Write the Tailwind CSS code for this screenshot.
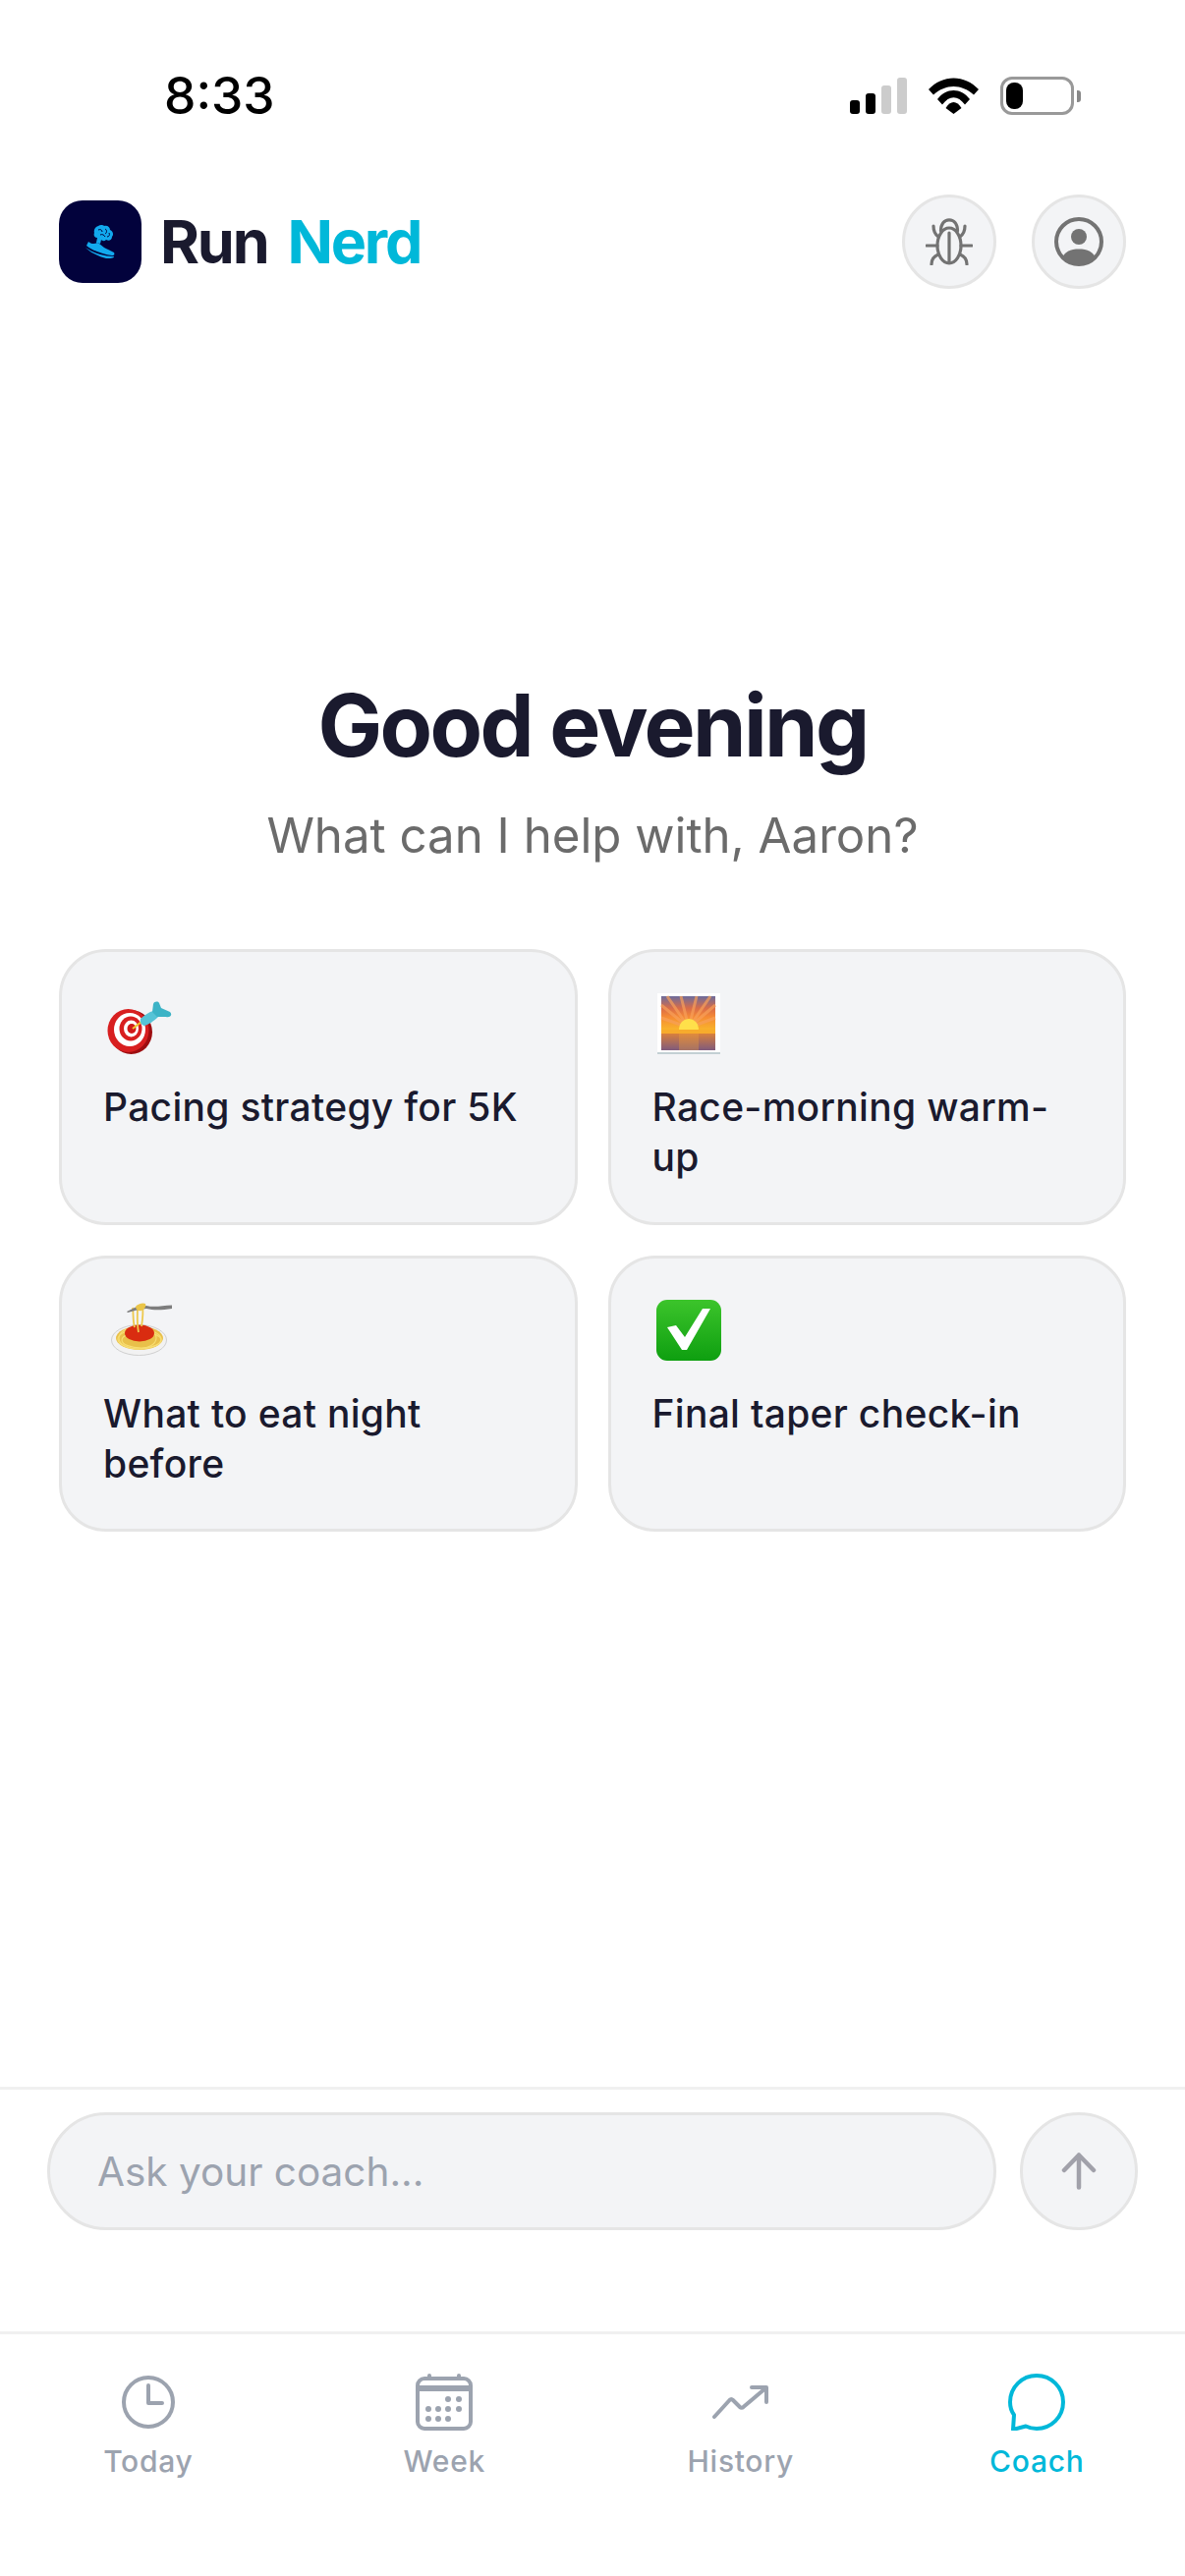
<!DOCTYPE html>
<html lang="en">
<head>
    <meta charset="UTF-8">
    <meta name="viewport" content="width=device-width, initial-scale=1.0">
    <title>Run Nerd</title>
    <script src="https://cdn.jsdelivr.net/npm/@tailwindcss/browser@4"></script>
</head>
<body class="bg-white font-['Inter',sans-serif]">
<div class="w-[1206px] h-[2622px] flex flex-col overflow-hidden bg-white">

    <!-- status bar -->
    <div class="h-[204px] shrink-0 flex items-start justify-between pt-[66px] pl-[167px] pr-[106px]">
        <span class="text-[51.500px] leading-[63px] font-medium text-black">8:33</span>
        <div class="flex items-center gap-[22px] pt-[12px] h-[51px]">
            <div class="flex items-end gap-[6px] h-[37px]">
                <div class="w-[10px] h-[14px] rounded-[3px] bg-black"></div>
                <div class="w-[10px] h-[21px] rounded-[3px] bg-black"></div>
                <div class="w-[10px] h-[29px] rounded-[3px] bg-[#cccccc]"></div>
                <div class="w-[10px] h-[37px] rounded-[3px] bg-[#cccccc]"></div>
            </div>
            <svg width="51" height="37" viewBox="0 0 51 37" fill="black">
                <path d="M0 12C14-3.500 37-3.500 51 12L46 17.500C33.500 6 17.500 6 5 17.500Z"/>
                <path d="M9 22C18 10 33 10 42 22L37 27.500C30 17.700 21 17.700 14 27.500Z"/>
                <path d="M17.500 31C22 23 29 23 33.500 31L25.500 37Z"/>
            </svg>
            <div class="flex items-center gap-[3px]">
                <div class="w-[75px] h-[39px] rounded-[12px] border-[3px] border-[#999999] p-[3px]">
                    <div class="w-[17px] h-full rounded-[8px] bg-black"></div>
                </div>
                <div class="w-[4px] h-[12px] rounded-r-[3px] bg-[#888888]"></div>
            </div>
        </div>
    </div>

    <!-- header -->
    <header class="h-[90px] shrink-0 flex items-center justify-between pl-[60px] pr-[60px] -mt-[3px]">
        <div class="flex items-center gap-[19px]">
            <div class="w-[84px] h-[84px] rounded-[24px] bg-[#02023c] flex items-center justify-center">
                <svg width="30" height="34" viewBox="0 0 30 34" fill="#12a9ee">
                    <path d="M13 1C15-.5 18 0 19 1C22 0 25 2 25 5C28 6 29 10 27 12C27 15 24 17 21 15C19 17 17 16 16 15L15 19L11 18L12 13C9 13 8 10 9 8C8 5 10 2 13 1Z"/>
                    <path d="M13 5C15 4 17 5 17 7M20 4C22 5 22 8 20 9M15 10C17 9 19 10 20 12M24 8C25 10 24 12 22 12" fill="none" stroke="#02023c" stroke-width="1"/>
                    <path d="M3 17C5 19 9 20 12 18L14 19L19 23C22 25 26 26 29 28C30 30 29 31 27 31C18 30 7 26 1 21Z"/>
                    <path d="M0 23C7 28 18 32 29 32C29 34 25 34 21 34C13 32 5 28 0 23Z"/>
                </svg>
            </div>
            <div class="text-[61px] leading-[72px] font-bold tracking-[-2.200px] text-[#1a1a2e] flex gap-[20px]">
                <span>Run</span>
                <span class="text-[#00b8d9]">Nerd</span>
            </div>
        </div>
        <div class="flex gap-[36px]">
            <button class="w-[96px] h-[96px] rounded-full bg-[#f3f4f6] border-[3px] border-[#e5e5e5] flex items-center justify-center">
                <svg width="48" height="48" viewBox="0 0 48 48" fill="none" stroke="#737373" stroke-width="3.200" stroke-linecap="round">
                    <ellipse cx="24" cy="28" rx="12" ry="18"/>
                    <path d="M15.500 13C15.500 6 19 1.800 24 1.800C29 1.800 32.500 6 32.500 13"/>
                    <path d="M24 15V44"/>
                    <path d="M8 8C8 13 9 16 13 19M40 8C40 13 39 16 35 19"/>
                    <path d="M1 28H12M36 28H47"/>
                    <path d="M6 47C6 42 8 39 13 37M42 47C42 42 40 39 35 37"/>
                </svg>
            </button>
            <button class="w-[96px] h-[96px] rounded-full bg-[#f3f4f6] border-[3px] border-[#e5e5e5] flex items-center justify-center">
                <svg width="50" height="50" viewBox="0 0 50 50">
                    <circle cx="25" cy="25" r="23" fill="none" stroke="#737373" stroke-width="4"/>
                    <circle cx="25" cy="20" r="8" fill="#737373"/>
                    <path d="M8 41C12 34 18 32.500 25 32.500C32 32.500 38 34 42 41C38 46 32 48 25 48C18 48 12 46 8 41Z" fill="#737373"/>
                </svg>
            </button>
        </div>
    </header>

    <!-- greeting + suggestions -->
    <main class="flex-1 px-[60px]">
        <div class="flex flex-col items-center pt-[395px]">
            <h1 class="text-[87.500px] leading-[104px] font-bold tracking-[-2.600px] text-[#1a1a2e]">Good evening</h1>
            <p class="mt-[31px] text-[49.200px] leading-[58px] text-[#6b6b6b]">What can I help with, Aaron?</p>
        </div>
        <div class="grid grid-cols-2 gap-[31px] mt-[87px]">

            <div class="h-[281px] rounded-[48px] bg-[#f3f4f6] border-[3px] border-[#e5e5e5] px-[42px] pt-[42px]">
                <div class="h-[90px] pt-[6px] pl-[4px]">
                    <svg width="66" height="56" viewBox="0 0 66 56">
                        <ellipse cx="24.500" cy="33.500" rx="21.500" ry="22.500" fill="#9d0d10"/>
                        <ellipse cx="21.500" cy="32" rx="21" ry="22" fill="#d81f20"/>
                        <ellipse cx="23" cy="31" rx="16" ry="17" fill="#ffffff"/>
                        <ellipse cx="24" cy="30" rx="11.500" ry="12.500" fill="#d81f20"/>
                        <ellipse cx="24.500" cy="30" rx="7.500" ry="8.500" fill="#ffffff"/>
                        <ellipse cx="25" cy="30" rx="4.500" ry="5" fill="#d01a1a"/>
                        <path d="M26 30L35 23" stroke="#f0c830" stroke-width="2"/>
                        <path d="M34 20C38 16 43 13 47 12L52 18C48 22 42 26 38 27C35 27 33 23 34 20Z" fill="#56c3d6"/>
                        <path d="M46 13L47 5C48 2 52 2 53 4L55 9L64 13C67 16 64 19 60 18L51 18Z" fill="#3cb3c6"/>
                    </svg>
                </div>
                <p class="text-[39px] leading-[51px] font-medium tracking-[0.300px] text-[#1a1a2e]">Pacing strategy for 5K</p>
            </div>

            <div class="h-[281px] rounded-[48px] bg-[#f3f4f6] border-[3px] border-[#e5e5e5] px-[42px] pt-[42px]">
                <div class="h-[90px] pl-[5px]">
                    <svg width="64" height="62" viewBox="0 0 64 62">
                        <defs>
                            <linearGradient id="sky" x1="0" y1="0" x2="0" y2="1">
                                <stop offset="0" stop-color="#6c6c9c"/>
                                <stop offset=".35" stop-color="#d96c48"/>
                                <stop offset=".6" stop-color="#f58a35"/>
                                <stop offset="1" stop-color="#f9b62a"/>
                            </linearGradient>
                            <linearGradient id="water" x1="0" y1="0" x2="0" y2="1">
                                <stop offset="0" stop-color="#d9803c"/>
                                <stop offset="1" stop-color="#7f5a7c"/>
                            </linearGradient>
                        </defs>
                        <rect width="64" height="62" fill="#ffffff"/>
                        <rect y="60" width="64" height="2" fill="#c3d0d4"/>
                        <rect x="4" y="3" width="55" height="35" fill="url(#sky)"/>
                        <path d="M32 35L10 3M32 35L24 3M32 35L40 3M32 35L54 3M32 35L4 12M32 35L59 12M32 35L4 25M32 35L59 25" stroke="#f8a05a" stroke-width="3" opacity=".7"/>
                        <circle cx="32" cy="36" r="10" fill="#ffe04a"/>
                        <rect x="4" y="37" width="55" height="4" fill="#f7ab2c"/>
                        <rect x="4" y="41" width="55" height="17" fill="url(#water)"/>
                        <rect x="22" y="41" width="20" height="17" fill="#eda03b" opacity=".35"/>
                    </svg>
                </div>
                <p class="text-[39px] leading-[51px] font-medium tracking-[0.300px] text-[#1a1a2e]">Race-morning warm-up</p>
            </div>

            <div class="h-[281px] rounded-[48px] bg-[#f3f4f6] border-[3px] border-[#e5e5e5] px-[42px] pt-[42px]">
                <div class="h-[90px] pt-[3px] pl-[8px]">
                    <svg width="62" height="54" viewBox="0 0 62 54">
                        <ellipse cx="28.500" cy="38" rx="28" ry="15.500" fill="#f2f2f2" stroke="#cfcfcf"/>
                        <ellipse cx="29" cy="36" rx="24" ry="12" fill="#e9c04a"/>
                        <g fill="none" stroke="#f7dd72" stroke-width="1.200">
                            <ellipse cx="29" cy="37" rx="22" ry="10"/>
                            <ellipse cx="27" cy="36" rx="19" ry="11"/>
                            <ellipse cx="31" cy="38" rx="20" ry="8"/>
                        </g>
                        <ellipse cx="29" cy="31" rx="15" ry="8.500" fill="#d92c10"/>
                        <path d="M22 5C23 12 22 18 24 25M27 3C27 12 26 20 28 30M32 3C33 10 32 18 31 24" fill="none" stroke="#edc94e" stroke-width="1.800"/>
                        <path d="M16 9L26 4L36 3C44 5 52 3 62 2.500V6C52 7.500 44 8 36 6L28 7L17 10Z" fill="#7d7d7d"/>
                        <path d="M25 4C27 1 33-.5 35 1C36 4 34 7 31 8C28 9 25 7 25 4Z" fill="#eac548"/>
                    </svg>
                </div>
                <p class="text-[39px] leading-[51px] font-medium tracking-[0.300px] text-[#1a1a2e]">What to eat night before</p>
            </div>

            <div class="h-[281px] rounded-[48px] bg-[#f3f4f6] border-[3px] border-[#e5e5e5] px-[42px] pt-[42px]">
                <div class="h-[90px] pl-[4px]">
                    <svg width="66" height="62" viewBox="0 0 66 62">
                        <defs>
                            <linearGradient id="green" x1="0" y1="0" x2="0" y2="1">
                                <stop offset="0" stop-color="#3cc42b"/>
                                <stop offset="1" stop-color="#0e9f10"/>
                            </linearGradient>
                        </defs>
                        <rect width="66" height="62" rx="11" fill="url(#green)"/>
                        <path d="M11 28L20 26L29 38L47 9L55 9L31 51L26 51Z" fill="#ffffff"/>
                    </svg>
                </div>
                <p class="text-[39px] leading-[51px] font-medium tracking-[0.300px] text-[#1a1a2e]">Final taper check-in</p>
            </div>

        </div>
    </main>

    <!-- composer -->
    <div class="h-[249px] shrink-0 border-t-[3px] border-[#f0f0f0] pl-[48px] pr-[48px] pt-[23px] flex gap-[24px]">
        <div class="flex-1 h-[120px] rounded-full bg-[#f3f4f6] border-[3px] border-[#e5e5e5] flex items-center pl-[48px] pt-[2px]">
            <span class="text-[40.500px] text-[#9ca3af]">Ask your coach...</span>
        </div>
        <button class="w-[120px] h-[120px] rounded-full bg-[#f3f4f6] border-[3px] border-[#e5e5e5] flex items-center justify-center">
            <svg width="36" height="38" viewBox="0 0 36 38" fill="none" stroke="#a1a1aa" stroke-width="4.500" stroke-linecap="round" stroke-linejoin="round">
                <path d="M18 35.500V2.500M3 18L18 2.500L33 18"/>
            </svg>
        </button>
    </div>

    <!-- bottom nav -->
    <nav class="h-[249px] shrink-0 border-t-[3px] border-[#f0f0f0] grid grid-cols-4 pt-[40px]">
        <div class="flex flex-col items-center">
            <svg width="58" height="58" viewBox="0 0 58 58" fill="none" stroke="#9ca3af" stroke-width="4" stroke-linecap="round" stroke-linejoin="round">
                <circle cx="29" cy="29" r="25"/>
                <path d="M29 12V30H43"/>
            </svg>
            <span class="mt-[13px] text-[30px] leading-[36px] font-medium tracking-[0.700px] text-[#9ca3af]">Today</span>
        </div>
        <div class="flex flex-col items-center">
            <svg width="58" height="58" viewBox="0 0 58 58" fill="#9ca3af">
                <rect x="2" y="5" width="54" height="51" rx="7" fill="none" stroke="#9ca3af" stroke-width="4"/>
                <rect x="2" y="12" width="54" height="6"/>
                <rect x="12" y="0" width="4" height="7" rx="2"/><rect x="42" y="0" width="4" height="7" rx="2"/>
                <circle cx="33" cy="26" r="3"/><circle cx="44" cy="26" r="3"/>
                <circle cx="13" cy="36" r="3"/><circle cx="23" cy="36" r="3"/><circle cx="33" cy="36" r="3"/><circle cx="44" cy="36" r="3"/>
                <circle cx="13" cy="46" r="3"/><circle cx="23" cy="46" r="3"/><circle cx="33" cy="46" r="3"/>
            </svg>
            <span class="mt-[13px] text-[30px] leading-[36px] font-medium tracking-[0.700px] text-[#9ca3af]">Week</span>
        </div>
        <div class="flex flex-col items-center">
            <svg width="58" height="58" viewBox="0 0 58 58" fill="none" stroke="#9ca3af" stroke-width="4" stroke-linecap="round" stroke-linejoin="round">
                <path d="M2 44L17.500 27C18.500 26 20 26 21 27L28 34C29 35 30.500 35 31.500 34L54 15"/>
                <path d="M40 14H55V29"/>
            </svg>
            <span class="mt-[13px] text-[30px] leading-[36px] font-medium tracking-[0.700px] text-[#9ca3af]">History</span>
        </div>
        <div class="flex flex-col items-center">
            <svg width="58" height="58" viewBox="0 0 58 58" fill="none" stroke="#00b8d9" stroke-width="4" stroke-linecap="round" stroke-linejoin="round">
                <path d="M6 42C3 38 2 33 2 29C2 14 14 2 29 2C44 2 56 14 56 29C56 44 44 56 29 56C25 56 21 55 18 53.500L5 57Z"/>
            </svg>
            <span class="mt-[13px] text-[30px] leading-[36px] font-medium tracking-[0.700px] text-[#00b8d9]">Coach</span>
        </div>
    </nav>
</div>
</body>
</html>
